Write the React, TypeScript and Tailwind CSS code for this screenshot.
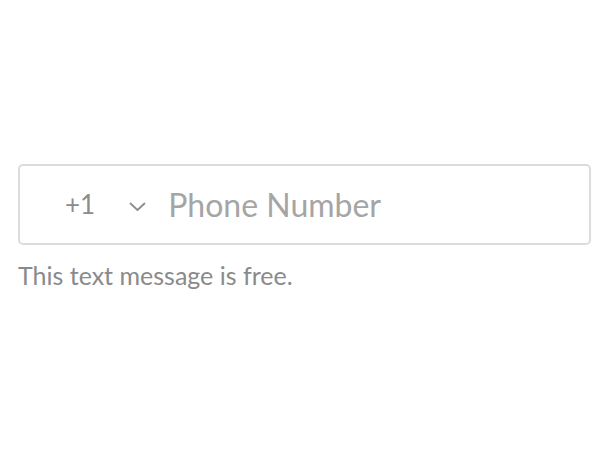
import React from 'react';

const App: React.FC = () => {
  return (
    <div className="w-[600px] h-[450px] bg-white px-[18px] pt-[164px] font-['Lato','Open_Sans',sans-serif]">
      <div className="flex items-center h-[81px] w-[573px] border-2 border-[#dcdcdc] rounded-[5px] bg-white">
        <span className="ml-[45px] text-[26px] text-[#8c8c8c]">+1</span>
        <svg className="ml-[34px] mt-[4px]" width="17" height="10" viewBox="0 0 17 10" fill="none">
          <path d="M1.5 1.5 L8.5 8 L15.5 1.5" stroke="#8c8c8c" strokeWidth="1.8" strokeLinecap="round" strokeLinejoin="round" />
        </svg>
        <input
          className="ml-[22px] flex-1 outline-none text-[32px] text-[#555] placeholder:text-[#a5a5a5] bg-transparent"
          placeholder="Phone Number"
        />
      </div>
      <p className="mt-[15px] text-[25px] text-[#8a8a8a] leading-tight">This text message is free.</p>
    </div>
  );
};

export default App;
